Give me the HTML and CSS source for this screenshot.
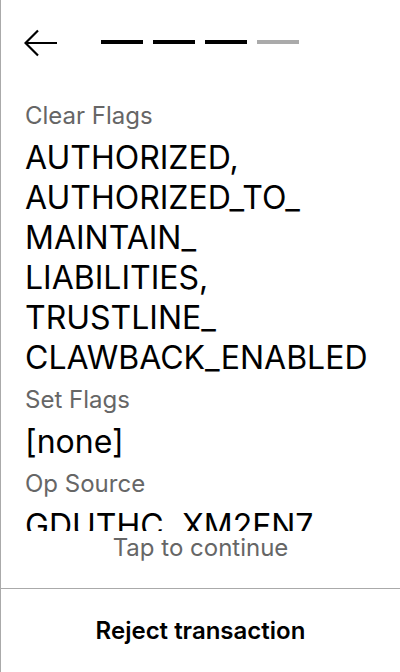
FILE: index.html
```html
<!DOCTYPE html>
<html>
<head>
<meta charset="utf-8">
<link rel="stylesheet" href="styles.css">
</head>
<body>
<div class="app">
  <header class="header">
    <svg class="back" width="34" height="28" viewBox="0 0 34 28">
      <path d="M14 1.5 L1.5 14 L14 26.5 M1.5 14 H33" fill="none" stroke="#000" stroke-width="2.2"/>
    </svg>
    <div class="steps">
      <span class="step done"></span>
      <span class="step done"></span>
      <span class="step done"></span>
      <span class="step"></span>
    </div>
  </header>
  <main class="content">
    <div class="label">Clear Flags</div>
    <div class="value">AUTHORIZED,<br>AUTHORIZED_TO_<br>MAINTAIN_<br>LIABILITIES,<br>TRUSTLINE_<br>CLAWBACK_ENABLED</div>
    <div class="label">Set Flags</div>
    <div class="value">[none]</div>
    <div class="label">Op Source</div>
    <div class="value">GDUTHC..XM2FN7</div>
  </main>
  <div class="tap">Tap to continue</div>
  <footer class="footer">
    <button class="reject">Reject transaction</button>
  </footer>
</div>
</body>
</html>
```

FILE: styles.css
```css
html, body {
  margin: 0;
  padding: 0;
  background: #fff;
}
.app {
  width: 400px;
  height: 672px;
  box-sizing: border-box;
  border-left: 1px solid #aaa;
  display: flex;
  flex-direction: column;
  font-family: Inter, "Noto Sans", sans-serif;
  color: #000;
}
.header {
  height: 86px;
  flex: none;
  display: flex;
  align-items: center;
  padding-left: 23px;
  box-sizing: border-box;
}
.back {
  display: block;
}
.steps {
  display: flex;
  gap: 10px;
  margin-left: 43px;
  margin-top: -2px;
}
.step {
  display: block;
  width: 42px;
  height: 4px;
  background: #aaa;
}
.step.done {
  background: #000;
}
.content {
  height: 445px;
  flex: none;
  overflow: hidden;
  padding: 14px 24px 0;
  box-sizing: border-box;
}
.label {
  font-size: 24px;
  line-height: 32px;
  color: #666;
  margin-top: 6px;
}
.label:first-child {
  margin-top: 0;
}
.value {
  font-size: 32px;
  line-height: 40px;
  margin-top: 6px;
  white-space: nowrap;
}
.tap {
  height: 57px;
  flex: none;
  box-sizing: border-box;
  padding-top: 5px;
  text-align: center;
  font-size: 24px;
  line-height: 24px;
  color: #666;
}
.footer {
  flex: 1;
  border-top: 1px solid #aaa;
  display: flex;
  align-items: center;
  justify-content: center;
}
.reject {
  background: none;
  border: none;
  padding: 0;
  font-family: inherit;
  font-size: 24px;
  font-weight: 600;
  color: #000;
}
```
